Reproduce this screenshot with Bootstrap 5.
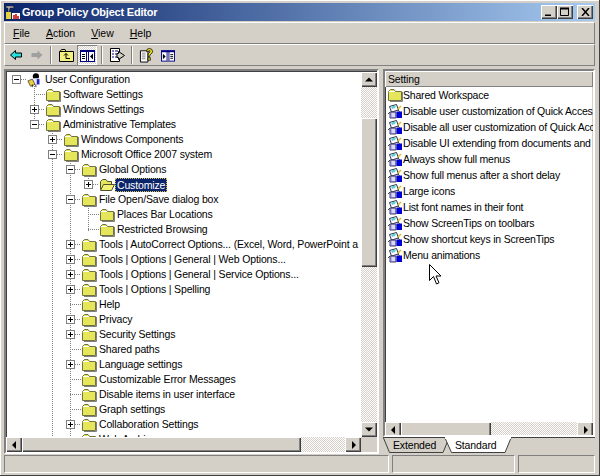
<!doctype html>
<html lang="en">
<head>
<meta charset="utf-8">
<title>Group Policy Object Editor</title>
<link rel="stylesheet" href="https://cdn.jsdelivr.net/npm/bootstrap@5.3.0/dist/css/bootstrap.min.css">
<style>
html,body{margin:0;height:476px;overflow:hidden;background:#d4d0c8}
body{font:10.5px/15px "Liberation Sans",Tahoma,sans-serif;letter-spacing:-.15px;color:#000;width:600px}
.win{width:600px;height:476px;background:#d4d0c8;padding:3px 4px;border-right:1px solid #404040;border-bottom:1px solid #404040;box-shadow:inset 1px 1px 0 #fff}
.ttl{height:18px;background:linear-gradient(90deg,#0a246a,#a6caf0);color:#fff;font-weight:700;font-size:11px;letter-spacing:-.2px;line-height:18px;padding:0 2px 0 1px}
.ttl-ic{margin-right:1px;flex:none}
.cap{width:16px;height:14px;background:#d4d0c8;box-shadow:inset 1px 1px 0 #fff,inset -1px -1px 0 #404040,inset -2px -2px 0 #808080;display:flex}
.cap svg{display:block;margin:auto}
.menu{height:22px;margin-top:1px;border:1px solid;border-color:#fff #808080 #808080 #fff;padding-left:3px;line-height:20px;letter-spacing:0}
.menu span{padding:0 8px 0 5px;margin-right:3px}
.menu u{text-decoration:underline}
.tools{height:22px;border:1px solid;border-color:#fff #808080 #808080 #fff}
.tb{width:21px;height:20px;display:flex;flex:none}
.tb svg{margin:auto;display:block}
.on{width:20px;background-image:repeating-conic-gradient(#fff 0 25%,#d4d0c8 0 50%);background-size:2px 2px;box-shadow:inset 1px 1px 0 #808080,inset -1px -1px 0 #fff}
.sepr{width:2px;height:18px;margin:1px 4px 1px 3px;flex:none;border-left:1px solid #808080;border-right:1px solid #fff}
.s2{margin-left:4px}
.s3{margin-right:3px}
.panes{height:385px;margin-top:3px;gap:4px}
.lp,.rp{border:2px solid;border-color:#808080 #fff #fff #808080;box-shadow:inset 1px 1px 0 #404040,inset -1px -1px 0 #d4d0c8;background:#fff;position:relative;overflow:hidden}
.lp{width:375px;height:385px;padding:1px 0 0}
.rp{width:212px;height:368px}
.rcol{width:212px}
.tree{width:355px;height:365px;overflow:hidden;position:relative}
.tline{position:absolute;left:0;top:0}
.tr{height:15px;display:flex;align-items:center;white-space:nowrap;position:relative}
.tr svg{flex:none}
.d0{padding-left:6px}.d1{padding-left:24px}.d2{padding-left:42px}.d3{padding-left:60px}.d4{padding-left:78px}
.xp{width:9px;height:9px;margin-right:6px}
.gp{width:9px;height:9px;margin-right:6px}
.fi{width:16px;height:14px;margin-right:2px}
.ui{width:16px;height:16px;margin-right:2px}
.sel{background:#0a246a;color:#fff;outline:1px dotted #d8c060;outline-offset:-1px;padding:0 2px;margin-left:-2px;height:14px;line-height:14px}
.sb{background-image:repeating-conic-gradient(#fff 0 25%,#d4d0c8 0 50%);background-size:2px 2px}
.vs{width:16px;height:365px;flex:none}
.hs{height:15px}
.sbtn{width:16px;height:15px;flex:none;background:#d4d0c8;box-shadow:inset 1px 1px 0 #fff,inset -1px -1px 0 #404040,inset -2px -2px 0 #808080;display:flex}
.sbtn svg{margin:auto;display:block}
.thumb{background:#d4d0c8;box-shadow:inset 1px 1px 0 #fff,inset -1px -1px 0 #404040,inset -2px -2px 0 #808080;flex:none}
.corner{width:16px;height:15px;background:#d4d0c8;flex:none}
.hdr{height:16px;background:#d4d0c8;box-shadow:inset 1px 1px 0 #fff,inset -1px -1px 0 #808080;padding-left:3px;line-height:16px}
.lst{height:335px;overflow:hidden}
.li{height:16px;display:flex;align-items:center;white-space:nowrap;padding-left:2px;letter-spacing:-.2px}
.li svg{flex:none;width:16px;height:16px}
.tabs{height:17px;position:relative}
.tabs svg{display:block}
.tabs text{font:10.5px "Liberation Sans",sans-serif;letter-spacing:-.15px}
.stat{height:18px;margin-top:1px;gap:3px}
.stat div{border:1px solid;border-color:#808080 #fff #fff #808080;height:18px}
.li .cur{position:absolute;left:44px;top:17px;width:13px;height:21px}
.vt1{height:31px}.vth{height:149px;width:16px}
.hb{width:44px}.rth{width:90px}
.st1{width:386px}.st2{width:123px}.st3{width:77px}
</style>
</head>
<body>
<svg width="0" height="0" class="position-absolute">
<defs>
<symbol id="f" viewBox="0 0 16 14"><path d="M1.500 4.500V12.500H14.500V3.500H8.500L7 1.500H3.500L1.500 3.500Z" fill="#e6e65a" stroke="#707040"/><path d="M2 3.500H8" stroke="#fff"/><path d="M15.500 4V13.500H3" stroke="#808080" fill="none"/></symbol>
<symbol id="fo" viewBox="0 0 16 14"><path d="M1.500 11.500V3.500L3.500 1.500H7L8.500 3.500H12.500V6" fill="#e6e65a" stroke="#505030"/><path d="M1.500 12.500L4.500 6.500H15.500L12.500 12.500Z" fill="#f2f070" stroke="#505030"/></symbol>
<symbol id="p" viewBox="0 0 9 9"><rect x=".5" y=".5" width="8" height="8" fill="#fff" stroke="#808080"/><path d="M2 4.500H7M4.500 2V7" stroke="#000"/></symbol>
<symbol id="m" viewBox="0 0 9 9"><rect x=".5" y=".5" width="8" height="8" fill="#fff" stroke="#808080"/><path d="M2 4.500H7" stroke="#000"/></symbol>
<symbol id="pol" viewBox="0 0 16 16"><path d="M2.500 3.500L9.500 1.500L11.500 7L4.500 9Z" fill="#fff" stroke="#303050"/><path d="M4 3.500L9 2.500L8 5L5 6Z" fill="#60d0d0"/><path d="M3 9H9V15H3Z" fill="#b0b0f0" stroke="#404060"/><path d="M5 11H8M5 13H8" stroke="#fff"/><path d="M9.500 8.500H15V15H9.500Z" fill="#0000d8"/><path d="M11 6L14 3" stroke="#d0c020" stroke-width="1.500"/><path d="M1 11L3 9M11 7L13 9" stroke="#404040"/></symbol>
<symbol id="l" viewBox="0 0 5 8"><path d="M4 0V8L0 4Z" fill="#000"/></symbol>
<symbol id="r" viewBox="0 0 5 8"><path d="M1 0V8L5 4Z" fill="#000"/></symbol>
<symbol id="u" viewBox="0 0 8 5"><path d="M0 4.500H8L4 .5Z" fill="#000"/></symbol>
<symbol id="d" viewBox="0 0 8 5"><path d="M0 .5H8L4 4.500Z" fill="#000"/></symbol>
</defs>
</svg>
<div class="win">
  <div class="ttl d-flex align-items-center">
    <svg width="16" height="16" viewBox="0 0 16 16" class="ttl-ic"><path d="M1 2H8L9 4H5L4 8H3V4H1Z" fill="#b0b0b0" stroke="#202020" stroke-width=".5"/><rect x="1" y="8" width="5" height="7" fill="#e8d040"/><rect x="7" y="9" width="8" height="6" fill="#fff"/><path d="M9 15V11M11 15V10M13 15V12" stroke="#c00000" stroke-width="1.500"/></svg>
    <span class="flex-grow-1">Group Policy Object Editor</span>
    <div class="cap"><svg width="8" height="8" viewBox="0 0 8 8"><path d="M0 6.500H6V8H0Z" fill="#000"/></svg></div>
    <div class="cap"><svg width="10" height="10" viewBox="0 0 10 10"><path d="M.5 1.500H8.500V8.500H.5Z" fill="none" stroke="#000"/><path d="M0 1.500H9" stroke="#000" stroke-width="2"/></svg></div>
    <div class="cap ms-1"><svg width="9" height="8" viewBox="0 0 9 8"><path d="M1 0L8 8M8 0L1 8" stroke="#000" stroke-width="1.500"/></svg></div>
  </div>
  <div class="menu d-flex">
    <span><u>F</u>ile</span><span><u>A</u>ction</span><span><u>V</u>iew</span><span><u>H</u>elp</span>
  </div>
  <div class="tools d-flex align-items-center">
    <div class="tb"><svg width="12" height="10" viewBox="0 0 12 10"><path d="M5.500 .5L.5 5L5.500 9.500V7H11.500V3H5.500Z" fill="#20e0e0" stroke="#000"/></svg></div>
    <div class="tb"><svg width="12" height="10" viewBox="0 0 12 10"><path d="M6.500 .5L11.500 5L6.500 9.500V7H.5V3H6.500Z" fill="#a0a0a0"/></svg></div>
    <div class="sepr"></div>
    <div class="tb"><svg width="15" height="13" viewBox="0 0 15 13"><path d="M.5 2.500H14.500V12.500H.5ZM1 2.500L2.500 .5H6L7 2.500" fill="#f4f080" stroke="#000"/><path d="M7 4.500V9.500H11M5 6.500L7 4.500L9 6.500" fill="none" stroke="#000"/></svg></div>
    <div class="tb on"><svg width="15" height="13" viewBox="0 0 15 13"><rect x=".5" y="1.500" width="14" height="11" fill="#fff" stroke="#000080"/><rect x="0" y="1" width="15" height="2" fill="#000080"/><path d="M6.500 2V12M8.500 2V12" stroke="#000080"/><path d="M2 5.500H5M2 7.500H5M2 9.500H5" stroke="#000"/><path d="M13 4.500L10 7.500L13 10.500Z" fill="#000"/></svg></div>
    <div class="sepr s2"></div>
    <div class="tb"><svg width="15" height="14" viewBox="0 0 15 14"><path d="M.5 .5H9.500V13.500H.5Z" fill="#fff" stroke="#000"/><path d="M2 3H4M5 3H8M2 6H4M5 6H8M2 9H4M5 9H8" stroke="#000080"/><path d="M8.500 3.500L14.500 7.500L8.500 11.500V9.500H7V5.500H8.500Z" fill="#d4d0c8" stroke="#000"/></svg></div>
    <div class="sepr s3"></div>
    <div class="tb"><svg width="15" height="16" viewBox="0 0 16 16"><path d="M1.500 3.500H9.500V15.500H1.500Z" fill="#fff" stroke="#000"/><path d="M3 6H7M3 8H7M3 10H7M3 12H7" stroke="#808080"/><path d="M8 4.500Q8 1 11 1T14.500 4Q14.500 6 12.500 7Q11.500 7.500 11.500 9.500H9.500Q9.500 6 11 5.500Q12 5 11.500 3.500Q10.500 2.500 10 4.500Z" fill="#f0e020" stroke="#000" stroke-width=".8"/><rect x="9.500" y="11" width="2.500" height="2.500" fill="#f0e020" stroke="#000" stroke-width=".8"/></svg></div>
    <div class="tb"><svg width="14" height="13" viewBox="0 0 15 13"><rect x=".5" y="1.500" width="14" height="11" fill="#fff" stroke="#000080"/><rect x="0" y="1" width="15" height="2" fill="#000080"/><path d="M6.500 2V12M8.500 2V12" stroke="#000080"/><path d="M10 5.500H13M10 7.500H13M10 9.500H13" stroke="#000"/><path d="M2 4.500L5 7.500L2 10.500Z" fill="#000"/></svg></div>
  </div>
  <div class="panes d-flex">
    <div class="lp">
      <div class="d-flex">
        <div class="tree">
          <svg class="tline" width="355" height="365" fill="none" stroke="#808080" stroke-dasharray="1 1" shape-rendering="crispEdges">
            <path d="M10.500 7V12M28.500 10V54M46.500 55V365M64.500 85V365M82.500 100V114M82.500 130V160"/>
            <path d="M15 7H21M28 22H39M33 37H39M33 52H39M51 67H57M51 82H57M69 97H75M87 112H93M69 127H75M82 142H93M82 157H93"/>
            <path d="M69 172H75M69 187H75M69 202H75M69 217H75M64 232H75M69 247H75M69 262H75M64 277H75M69 292H75M64 307H75M64 322H75M64 337H75M69 352H75M64 367H75"/>
          </svg>
          <div class="tr d0"><svg class="xp"><use href="#m"/></svg><svg class="ui" viewBox="0 0 18 16"><circle cx="10" cy="4" r="3.500" fill="#000"/><path d="M7 6H14V13H7Z" fill="#e8e8ff"/><path d="M11 7H14V13H11Z" fill="#2020c0"/><path d="M1 9L6 7L9 13L4 15Z" fill="#e8d040" stroke="#303020" stroke-width=".8"/><path d="M6 13V16M10 13V16" stroke="#202020"/></svg><span>User Configuration</span></div>
          <div class="tr d1"><span class="gp"></span><svg class="fi"><use href="#f"/></svg><span>Software Settings</span></div>
          <div class="tr d1"><svg class="xp"><use href="#p"/></svg><svg class="fi"><use href="#f"/></svg><span>Windows Settings</span></div>
          <div class="tr d1"><svg class="xp"><use href="#m"/></svg><svg class="fi"><use href="#f"/></svg><span>Administrative Templates</span></div>
          <div class="tr d2"><svg class="xp"><use href="#p"/></svg><svg class="fi"><use href="#f"/></svg><span>Windows Components</span></div>
          <div class="tr d2"><svg class="xp"><use href="#m"/></svg><svg class="fi"><use href="#f"/></svg><span>Microsoft Office 2007 system</span></div>
          <div class="tr d3"><svg class="xp"><use href="#m"/></svg><svg class="fi"><use href="#f"/></svg><span>Global Options</span></div>
          <div class="tr d4"><svg class="xp"><use href="#p"/></svg><svg class="fi"><use href="#fo"/></svg><span class="sel">Customize</span></div>
          <div class="tr d3"><svg class="xp"><use href="#m"/></svg><svg class="fi"><use href="#f"/></svg><span>File Open/Save dialog box</span></div>
          <div class="tr d4"><span class="gp"></span><svg class="fi"><use href="#f"/></svg><span>Places Bar Locations</span></div>
          <div class="tr d4"><span class="gp"></span><svg class="fi"><use href="#f"/></svg><span>Restricted Browsing</span></div>
          <div class="tr d3"><svg class="xp"><use href="#p"/></svg><svg class="fi"><use href="#f"/></svg><span>Tools | AutoCorrect Options... (Excel, Word, PowerPoint a</span></div>
          <div class="tr d3"><svg class="xp"><use href="#p"/></svg><svg class="fi"><use href="#f"/></svg><span>Tools | Options | General | Web Options...</span></div>
          <div class="tr d3"><svg class="xp"><use href="#p"/></svg><svg class="fi"><use href="#f"/></svg><span>Tools | Options | General | Service Options...</span></div>
          <div class="tr d3"><svg class="xp"><use href="#p"/></svg><svg class="fi"><use href="#f"/></svg><span>Tools | Options | Spelling</span></div>
          <div class="tr d3"><span class="gp"></span><svg class="fi"><use href="#f"/></svg><span>Help</span></div>
          <div class="tr d3"><svg class="xp"><use href="#p"/></svg><svg class="fi"><use href="#f"/></svg><span>Privacy</span></div>
          <div class="tr d3"><svg class="xp"><use href="#p"/></svg><svg class="fi"><use href="#f"/></svg><span>Security Settings</span></div>
          <div class="tr d3"><span class="gp"></span><svg class="fi"><use href="#f"/></svg><span>Shared paths</span></div>
          <div class="tr d3"><svg class="xp"><use href="#p"/></svg><svg class="fi"><use href="#f"/></svg><span>Language settings</span></div>
          <div class="tr d3"><span class="gp"></span><svg class="fi"><use href="#f"/></svg><span>Customizable Error Messages</span></div>
          <div class="tr d3"><span class="gp"></span><svg class="fi"><use href="#f"/></svg><span>Disable items in user interface</span></div>
          <div class="tr d3"><span class="gp"></span><svg class="fi"><use href="#f"/></svg><span>Graph settings</span></div>
          <div class="tr d3"><svg class="xp"><use href="#p"/></svg><svg class="fi"><use href="#f"/></svg><span>Collaboration Settings</span></div>
          <div class="tr d3"><span class="gp"></span><svg class="fi"><use href="#f"/></svg><span>Web Archives</span></div>
        </div>
        <div class="vs d-flex flex-column sb">
          <div class="sbtn"><svg width="8" height="5"><use href="#u"/></svg></div>
          <div class="vt1"></div>
          <div class="thumb vth"></div>
          <div class="flex-grow-1"></div>
          <div class="sbtn"><svg width="8" height="5"><use href="#d"/></svg></div>
        </div>
      </div>
      <div class="d-flex hs">
        <div class="sbtn"><svg width="5" height="8"><use href="#l"/></svg></div>
        <div class="thumb flex-grow-1"></div>
        <div class="sb hb"></div>
        <div class="sbtn"><svg width="5" height="8"><use href="#r"/></svg></div>
        <div class="corner"></div>
      </div>
    </div>
    <div class="rcol">
      <div class="rp">
        <div class="hdr">Setting</div>
        <div class="lst position-relative">
          <div class="li"><svg><use href="#f"/></svg><span>Shared Workspace</span></div>
          <div class="li"><svg><use href="#pol"/></svg><span>Disable user customization of Quick Access</span></div>
          <div class="li"><svg><use href="#pol"/></svg><span>Disable all user customization of Quick Acce</span></div>
          <div class="li"><svg><use href="#pol"/></svg><span>Disable UI extending from documents and t</span></div>
          <div class="li"><svg><use href="#pol"/></svg><span>Always show full menus</span></div>
          <div class="li"><svg><use href="#pol"/></svg><span>Show full menus after a short delay</span></div>
          <div class="li"><svg><use href="#pol"/></svg><span>Large icons</span></div>
          <div class="li"><svg><use href="#pol"/></svg><span>List font names in their font</span></div>
          <div class="li"><svg><use href="#pol"/></svg><span>Show ScreenTips on toolbars</span></div>
          <div class="li"><svg><use href="#pol"/></svg><span>Show shortcut keys in ScreenTips</span></div>
          <div class="li position-relative"><svg><use href="#pol"/></svg><span>Menu animations</span>
            <svg class="cur" viewBox="0 0 13 21"><path d="M.5 .5V16.500L4.500 12.500L7.500 20L10 18.800L7 12H12Z" fill="#fff" stroke="#000" stroke-linejoin="round"/></svg>
          </div>
        </div>
        <div class="d-flex hs">
          <div class="sbtn"><svg width="5" height="8"><use href="#l"/></svg></div>
          <div class="thumb rth"></div>
          <div class="sb flex-grow-1"></div>
          <div class="sbtn"><svg width="5" height="8"><use href="#r"/></svg></div>
        </div>
      </div>
      <div class="tabs">
        <svg width="212" height="17" viewBox="0 0 212 17">
          <path d="M0 0H212" stroke="#404040" stroke-width="2"/>
          <path d="M.5 1L6.500 15.500H60L66 1" fill="#d4d0c8" stroke="#404040"/>
          <path d="M62 1L68.500 15.500H122L128 1" fill="#fff" stroke="#404040"/>
          <rect x="62" y="0" width="66" height="2" fill="#fff"/>
          <text x="10" y="12">Extended</text><text x="72" y="12">Standard</text>
        </svg>
      </div>
    </div>
  </div>
  <div class="stat d-flex">
    <div class="st1"></div><div class="st2"></div><div class="st3"></div>
  </div>
</div>
</body>
</html>
